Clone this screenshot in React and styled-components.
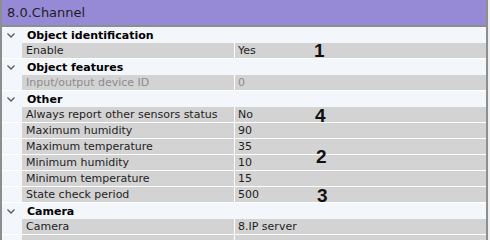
import React from "react";
import styled, { createGlobalStyle } from "styled-components";

const GlobalStyle = createGlobalStyle`
  html, body {
    margin: 0;
    padding: 0;
    background: #f0f0f0;
  }
  body {
    font-family: "DejaVu Sans", "Liberation Sans", sans-serif;
  }
`;

const Panel = styled.div`
  position: relative;
  width: 488px;
  height: 240px;
  box-sizing: border-box;
  border-left: 2px solid #8e8e8e;
  border-right: 2px solid #8e8e8e;
  background: #f3f6fb;
  overflow: hidden;
`;

const TitleBar = styled.div`
  height: 25px;
  border-bottom: 2px solid #8e8e8e;
  background: #968ad6;
  color: #1e1e1e;
  font-size: 13px;
  display: flex;
  align-items: center;
  padding-left: 5px;
`;

const GroupRow = styled.div`
  height: 16px;
  display: flex;
  align-items: center;
  background: #f3f6fb;
  font-size: 11px;
  font-weight: bold;
  color: #000;
`;

const Chevron = styled.svg`
  width: 25px;
  height: 16px;
  flex: none;
`;

const ItemRow = styled.div`
  height: 16px;
  box-sizing: border-box;
  border-bottom: 1px solid #ffffff;
  display: grid;
  grid-template-columns: 20px 213px 1fr;
  font-size: 11px;
  color: ${(p) => (p.$disabled ? "#8c8c8c" : "#1e1e1e")};
`;

const Indent = styled.div`
  background: #f3f6fb;
`;

const NameCell = styled.div`
  background: #d3d3d3;
  border-right: 1px solid #ffffff;
  padding-left: 4px;
  display: flex;
  align-items: center;
  white-space: nowrap;
`;

const ValueCell = styled.div`
  background: #d3d3d3;
  padding-left: 3px;
  display: flex;
  align-items: center;
  white-space: nowrap;
`;

const Marker = styled.span`
  position: absolute;
  left: ${(p) => p.$x}px;
  top: ${(p) => p.$y}px;
  font-family: "Liberation Sans", Arial, sans-serif;
  font-weight: bold;
  font-size: 19px;
  line-height: 1;
  color: #111;
`;

const groups = [
  {
    title: "Object identification",
    items: [{ name: "Enable", value: "Yes" }],
  },
  {
    title: "Object features",
    items: [{ name: "Input/output device ID", value: "0", disabled: true }],
  },
  {
    title: "Other",
    items: [
      { name: "Always report other sensors status", value: "No" },
      { name: "Maximum humidity", value: "90" },
      { name: "Maximum temperature", value: "35" },
      { name: "Minimum humidity", value: "10" },
      { name: "Minimum temperature", value: "15" },
      { name: "State check period", value: "500" },
    ],
  },
  {
    title: "Camera",
    items: [
      { name: "Camera", value: "8.IP server" },
      { name: "", value: "" },
    ],
  },
];

const markers = [
  { n: "1", x: 312, y: 41 },
  { n: "4", x: 313, y: 106 },
  { n: "2", x: 314, y: 147 },
  { n: "3", x: 315, y: 186 },
];

export default function App() {
  return (
    <>
      <GlobalStyle />
      <Panel>
        <TitleBar>8.0.Channel</TitleBar>
        {groups.map((g) => (
          <React.Fragment key={g.title}>
            <GroupRow>
              <Chevron viewBox="0 0 25 16">
                <path
                  d="M5.5 6.5 L9 10 L12.5 6.5"
                  fill="none"
                  stroke="#5a5a5a"
                  strokeWidth="1.3"
                />
              </Chevron>
              {g.title}
            </GroupRow>
            {g.items.map((it, i) => (
              <ItemRow key={i} $disabled={it.disabled}>
                <Indent />
                <NameCell>{it.name}</NameCell>
                <ValueCell>{it.value}</ValueCell>
              </ItemRow>
            ))}
          </React.Fragment>
        ))}
        {markers.map((m) => (
          <Marker key={m.n} $x={m.x} $y={m.y}>
            {m.n}
          </Marker>
        ))}
      </Panel>
    </>
  );
}
